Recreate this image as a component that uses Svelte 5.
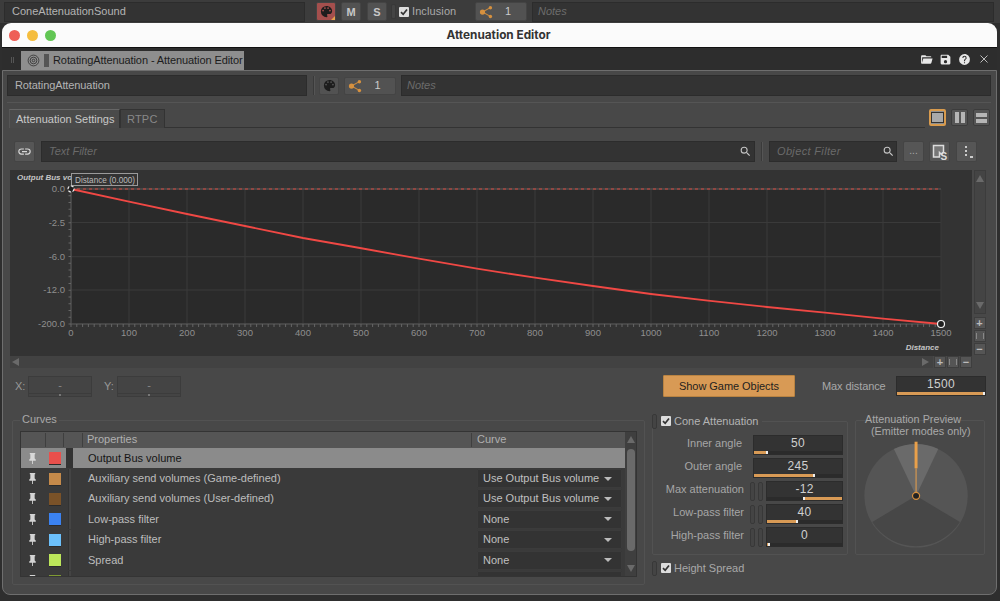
<script>
  const I = {
    palette: "M17.5,12A1.5,1.5 0 0,1 16,10.5A1.5,1.5 0 0,1 17.5,9A1.5,1.5 0 0,1 19,10.5A1.5,1.5 0 0,1 17.5,12M14.5,8A1.5,1.5 0 0,1 13,6.5A1.5,1.5 0 0,1 14.5,5A1.5,1.5 0 0,1 16,6.5A1.5,1.5 0 0,1 14.5,8M9.5,8A1.5,1.5 0 0,1 8,6.5A1.5,1.5 0 0,1 9.5,5A1.5,1.5 0 0,1 11,6.5A1.5,1.5 0 0,1 9.5,8M6.5,12A1.5,1.5 0 0,1 5,10.5A1.5,1.5 0 0,1 6.5,9A1.5,1.5 0 0,1 8,10.5A1.5,1.5 0 0,1 6.5,12M12,3A9,9 0 0,0 3,12A9,9 0 0,0 12,21A1.5,1.5 0 0,0 13.5,19.5C13.5,19.11 13.35,18.76 13.11,18.5C12.88,18.23 12.73,17.88 12.73,17.5A1.5,1.5 0 0,1 14.23,16H16A5,5 0 0,0 21,11C21,6.58 16.97,3 12,3Z",
    pin: "M16,12V4H17V2H7V4H8V12L6,14V16H11.2V22H12.8V16H18V14L16,12Z",
    save: "M15,9H5V5H15M12,19A3,3 0 0,1 9,16A3,3 0 0,1 12,13A3,3 0 0,1 15,16A3,3 0 0,1 12,19M17,3H5C3.89,3 3,3.9 3,5V19A2,2 0 0,0 5,21H19A2,2 0 0,0 21,19V7L17,3Z",
    help: "M15.07,11.25L14.17,12.17C13.45,12.89 13,13.5 13,15H11V14.5C11,13.39 11.45,12.39 12.17,11.67L13.41,10.41C13.78,10.05 14,9.55 14,9C14,7.89 13.1,7 12,7A2,2 0 0,0 10,9H8A4,4 0 0,1 12,5A4,4 0 0,1 16,9C16,9.88 15.64,10.67 15.07,11.25M13,19H11V17H13M12,2A10,10 0 0,0 2,12A10,10 0 0,0 12,22A10,10 0 0,0 22,12C22,6.47 17.5,2 12,2Z",
    folder: "M19,20H4C2.89,20 2,19.1 2,18V6C2,4.89 2.89,4 4,4H10L12,6H19A2,2 0 0,1 21,8H21L4,8V18L6.14,10H23.21L20.93,18.5C20.7,19.37 19.92,20 19,20Z",
    link: "M3.9,12C3.9,10.29 5.29,8.9 7,8.9H11V7H7A5,5 0 0,0 2,12A5,5 0 0,0 7,17H11V15.1H7C5.29,15.1 3.9,13.71 3.9,12M8,13H16V11H8V13M17,7H13V8.9H17C18.71,8.9 20.1,10.29 20.1,12C20.1,13.71 18.71,15.1 17,15.1H13V17H17A5,5 0 0,0 22,12A5,5 0 0,0 17,7Z",
    close: "M5,5L19,19M19,5L5,19",
    search: "M15.5,14H14.7L14.4,13.7C15.4,12.5 16,11.1 16,9.5A6.5,6.5 0 1,0 9.5,16C11.1,16 12.5,15.4 13.7,14.4L14,14.7V15.5L19,20.5L20.5,19L15.5,14M9.5,14A4.5,4.5 0 1,1 14,9.5A4.5,4.5 0 0,1 9.5,14Z"
  };
  const xs = Array.from({ length: 16 }, (_, i) => 72 + 58 * i);
  const ys = [[189, "0.0"], [222.5, "-2.5"], [256.7, "-6.0"], [290, "-12.0"], [324, "-200.0"]];
  const xTicks = Array.from({ length: 151 }, (_, i) => 72 + 5.8 * i);
  const yTicks = Array.from({ length: 21 }, (_, i) => 189 + 6.75 * i);
  const curve = "72,189 130,201.7 188,214 246,226 304,238 361,248 420,258.7 478,268.7 536,277.7 594,286 652,294 709,300.7 768,307 826,312.7 884,318.7 942,324";
  const rows = [
    { label: "Output Bus volume", color: "#e9504c", sel: true },
    { label: "Auxiliary send volumes (Game-defined)", color: "#c58a4a", curve: "Use Output Bus volume" },
    { label: "Auxiliary send volumes (User-defined)", color: "#7a5228", curve: "Use Output Bus volume" },
    { label: "Low-pass filter", color: "#3b82f0", curve: "None" },
    { label: "High-pass filter", color: "#6cc0fb", curve: "None" },
    { label: "Spread", color: "#bce65a", curve: "None" },
    { label: "", color: "#7f9a33", curve: "" }
  ];
  const cone = [
    { label: "Inner angle", value: "50", left: 0, width: 14 },
    { label: "Outer angle", value: "245", left: 0, width: 61 },
    { label: "Max attenuation", value: "-12", left: 36, width: 39, grip: true, rev: true },
    { label: "Low-pass filter", value: "40", left: 0, width: 31, grip: true },
    { label: "High-pass filter", value: "0", left: 0, width: 3, grip: true }
  ];
</script>

{#snippet icon(d, cls)}
  <svg class={"ic " + cls} viewBox="0 0 24 24" aria-hidden="true"><path {d} /></svg>
{/snippet}

{#snippet share()}
  <svg class="share" viewBox="0 0 16 16" aria-hidden="true">
    <path d="M4 8L13 3M4 8L13 13" />
    <circle cx="4" cy="8" r="3" /><circle cx="13" cy="3" r="2" /><circle cx="13" cy="13" r="2" />
  </svg>
{/snippet}

{#snippet grip()}
  <span class="grip"></span>
{/snippet}

{#snippet check()}
  <svg class="check" viewBox="0 0 11 11" aria-hidden="true"><path d="M2.2 5.6L4.6 8L8.8 2.8" /></svg>
{/snippet}

<div class="app">
  <div class="strip">
    <div class="input name-top">ConeAttenuationSound</div>
    <div class="btn pal-red">{@render icon(I.palette, "pal")}<i class="corner"></i></div>
    <div class="btn ms">M</div>
    <div class="btn ms">S</div>
    {@render grip()}
    <span class="cb top-cb">{@render check()}</span>
    <span class="incl">Inclusion</span>
    <div class="btn sharebtn top-share">{@render share()}<span>1</span></div>
    <div class="input notes top-notes">Notes</div>
  </div>

  <div class="window">
    <div class="title">
      <div class="lights"><i class="r"></i><i class="y"></i><i class="g"></i></div>
      <b>Attenuation Editor</b>
    </div>
    <div class="tabstrip">
      <span class="dots"></span>
      <div class="doc">
        <svg class="tgt" viewBox="0 0 14 14" aria-hidden="true"><circle cx="7" cy="7" r="5.8" /><circle cx="7" cy="7" r="3.6" /><circle cx="7" cy="7" r="1.4" /></svg>
        <i class="docbar"></i>
        <span>RotatingAttenuation - Attenuation Editor</span>
      </div>
      <div class="wintools">
        {@render icon(I.folder, "w")}
        {@render icon(I.save, "w")}
        {@render icon(I.help, "w")}
        <svg class="ic x" viewBox="0 0 24 24" aria-hidden="true"><path d={I.close} /></svg>
      </div>
    </div>

    <div class="panel">
      <div class="namerow">
        <div class="input name">RotatingAttenuation</div>
        <i class="vsep"></i>
        <div class="btn pal-btn">{@render icon(I.palette, "pal")}</div>
        <div class="btn sharebtn pshare">{@render share()}<span>1</span></div>
        <div class="input notes pnotes">Notes</div>
      </div>
      <div class="hr"></div>

      <div class="tabsrow">
        <div class="tab on">Attenuation Settings</div>
        <div class="tab">RTPC</div>
        <div class="tabline"></div>
        <div class="vbtn active"><i class="full"></i></div>
        <div class="vbtn"><i class="half"></i><i class="half"></i></div>
        <div class="vbtn col"><i class="wide"></i><i class="wide"></i></div>
      </div>

      <div class="filters">
        <div class="btn fb linkb">{@render icon(I.link, "lk")}</div>
        <div class="input filter tf"><span>Text Filter</span>{@render icon(I.search, "sr")}</div>
        <i class="vsep fsep"></i>
        <div class="input filter of"><span>Object Filter</span>{@render icon(I.search, "sr")}</div>
        <div class="btn fb dots3">...</div>
        <div class="btn fb msb">
          <svg viewBox="0 0 18 18" aria-hidden="true">
            <path class="flag" d="M2.5 2.5H12.5V9L10.5 11.5L8.5 9.5V14H2.5Z" />
            <text x="9.5" y="17" class="mstxt">S</text>
          </svg>
        </div>
        <div class="btn fb kebab">
          <svg viewBox="0 0 18 18" aria-hidden="true"><rect x="7" y="3" width="2" height="2" /><rect x="7" y="7" width="2" height="2" /><rect x="7" y="11" width="2" height="2" /><rect x="12" y="13" width="3" height="2" /></svg>
        </div>
      </div>

      <div class="chart">
        <svg class="plot" viewBox="11 170 962 186" aria-label="Curve graph">
          <rect x="72" y="189" width="870" height="135" fill="#2a2a2a" />
          {#each xs as x}<line x1={x} y1="189" x2={x} y2="324" class="g" />{/each}
          {#each ys as y}<line x1="72" y1={y[0]} x2="942" y2={y[0]} class="g" />{/each}
          <line x1="72" y1="324" x2="942" y2="324" class="axis" />
          <line x1="72" y1="189" x2="72" y2="324" class="axis" />
          <line x1="72" y1="189" x2="942" y2="189" class="axis" />
          <line x1="72" y1="189" x2="942" y2="189" class="dash" />
          {#each xTicks as x}<line x1={x} y1="324" x2={x} y2="327" class="tick" />{/each}
          {#each yTicks as y}<line x1="69.5" y1={y} x2="72" y2={y} class="tick" />{/each}
          {#each ys as y}<text x="66" y={y[0] + 3} class="lbl" text-anchor="end">{y[1]}</text>{/each}
          {#each xs as x, i}<text {x} y="336" class="lbl" text-anchor="middle">{i * 100}</text>{/each}
          <polyline points={curve} class="curve" />
          <text x="18" y="180" class="axt">Output Bus vol</text>
          <rect x="72.5" y="173.5" width="66" height="12" class="tip" />
          <text x="76" y="182.5" class="tiptxt">Distance (0.000)</text>
          <circle cx="72" cy="189" r="3" class="pt first" />
          <circle cx="942" cy="324" r="3.5" class="pt" />
          <text x="940" y="350" class="axt" text-anchor="end">Distance</text>
        </svg>
        <div class="vbar">
          <div class="vtrack"><i class="tri up"></i><i class="tri down"></i></div>
          <div class="zb">+</div><div class="zb fit"><i></i></div><div class="zb">−</div>
        </div>
        <div class="hbar">
          <div class="htrack"><i class="tri left"></i><i class="tri right"></i></div>
          <div class="zb">+</div><div class="zb fit"><i></i></div><div class="zb">−</div>
        </div>
      </div>

      <div class="ctrl">
        <span class="xy">X:</span><div class="xybox"><span>-</span><i class="xytrack"><i></i></i></div>
        <span class="xy yl">Y:</span><div class="xybox"><span>-</span><i class="xytrack"><i></i></i></div>
        <div class="showgo">Show Game Objects</div>
        <span class="maxl">Max distance</span>
        <div class="field maxf"><div class="val">1500</div><div class="track"><div class="fill full100"></div></div></div>
      </div>

      <div class="bottom">
        <div class="col-curves">
          <div class="legend">Curves</div>
          <div class="box curvesbox">
            <div class="table">
              <div class="thead">
                <span class="th c1"></span><span class="th c2"></span><span class="th c3"></span>
                <span class="th props">Properties</span>
                <span class="th curvec">Curve</span>
              </div>
              <div class="tbody">
                {#each rows as r}
                  <div class="row" class:sel={r.sel}>
                    <div class="pincell">{@render icon(I.pin, "pinic")}<i class="sw" style:background={r.color}></i></div>
                    <i class="rowgrip"></i>
                    <div class="rowmain">
                      <span class="rl">{r.label}</span>
                      {#if r.curve !== undefined}<div class="dd"><span>{r.curve}</span>{#if r.curve}<i class="tri ddtri"></i>{/if}</div>{/if}
                    </div>
                  </div>
                {/each}
              </div>
              <div class="sb">
                <i class="tri up"></i>
                <div class="thumb"></div>
                <i class="tri down"></i>
              </div>
            </div>
          </div>
        </div>

        <div class="col-cone">
          <div class="legend conel">{@render grip()}<span class="cb">{@render check()}</span>Cone Attenuation</div>
          <div class="box conebox">
            {#each cone as c}
              <div class="conerow">
                <span class="cl" class:short={c.grip}>{c.label}</span>
                {#if c.grip}{@render grip()}{@render grip()}{/if}
                <div class="field" class:narrow={c.grip}>
                  <div class="val">{c.value}</div>
                  <div class="track">
                    <div class="fill" class:rev={c.rev} style:margin-left="{c.left}px" style:width="{c.width}px"></div>
                  </div>
                </div>
              </div>
            {/each}
          </div>
          <div class="hs">{@render grip()}<span class="cb">{@render check()}</span>Height Spread</div>
        </div>

        <div class="col-prev">
          <div class="legend prevl">Attenuation Preview<br />&nbsp;&nbsp;(Emitter modes only)</div>
          <div class="box prevbox">
            <svg viewBox="0 0 130 135" aria-label="Preview">
              <circle cx="61" cy="76" r="52.5" fill="#555" />
              <path d="M61 76L38.5 28.5A52.5 52.5 0 0 1 83.5 28.5Z" fill="#6a6a6a" />
              <path d="M61 76L105.5 102.5A52.5 52.5 0 0 1 16.5 102.5Z" fill="#474747" />
              <rect x="59.5" y="21" width="3" height="27" fill="#e9a04a" />
              <rect x="60.5" y="48" width="1" height="27" fill="#e9a04a" />
              <circle cx="61" cy="76" r="3.6" fill="#222" stroke="#d9913f" stroke-width="1.2" />
            </svg>
          </div>
        </div>
      </div>
    </div>
  </div>
</div>

<style>
  :global(body) { margin: 0; background: #2b2b2b; }
  .app { width: 1000px; height: 601px; overflow: hidden; background: #2e2e2e; font: 11px/1 "Liberation Sans", Arial, sans-serif; color: #b8b8b8; }
  i { display: block; }
  .strip { height: 23px; background: #3c3c3c; display: flex; align-items: center; padding-left: 4px; box-sizing: border-box; }
  .input { background: #333; border: 1px solid #2c2c2c; box-sizing: border-box; height: 20px; display: flex; align-items: center; padding-left: 7px; color: #b4b4b4; }
  .name-top { width: 301px; height: 20px; margin-right: 11px; }
  .btn { box-sizing: border-box; height: 19px; background: #525252; border: 1px solid #444; border-radius: 2px; display: flex; align-items: center; justify-content: center; flex: none; }
  .ic { display: block; fill: currentColor; }
  .pal { width: 15px; height: 15px; color: #1d1d1d; }
  .pal-red { width: 20px; background: #a44f4d; margin-right: 5px; position: relative; }
  .corner { position: absolute; right: 0; bottom: 0; border-left: 4px solid transparent; border-bottom: 4px solid #e8a24c; }
  .ms { width: 20px; margin-right: 6px; font: bold 11px "Liberation Sans", sans-serif; color: #c8c8c8; }
  .ms + .ms { margin-right: 4px; }
  .grip { display: block; flex: none; width: 3px; height: 13px; border: 1px solid #383838; border-radius: 2px; background: #444; box-sizing: content-box; }
  .cb { display: flex; flex: none; width: 10px; height: 10px; background: #ddd; border-radius: 1px; align-items: center; justify-content: center; }
  .check { width: 10px; height: 10px; fill: none; stroke: #333; stroke-width: 1.9; }
  .top-cb { margin-left: 3px; }
  .incl { margin: 0 19px 0 3px; color: #aaa; width: 44px; letter-spacing: .1px; }
  .sharebtn { gap: 0; justify-content: flex-start; padding-left: 3px; color: #ccc; }
  .sharebtn span { flex: 1; text-align: center; }
  .share { width: 14px; height: 14px; flex: none; }
  .share path { stroke: #c98a3f; stroke-width: 1.2; fill: none; }
  .share circle { fill: #d6913f; }
  .top-share { width: 52px; margin-right: 5px; padding-right: 3px; }
  .notes { font-style: italic; color: #6c6c6c; }
  .top-notes { width: 462px; height: 20px; padding-left: 5px; }

  .window { margin: 0 3px 0 2px; height: 572px; display: flex; flex-direction: column; }
  .title { height: 25px; background: #fbfbfb; border-radius: 9px 9px 0 0; display: flex; align-items: center; justify-content: center; position: relative; color: #333; box-sizing: border-box; border-bottom: 1px solid #111; }
  .title b { font: bold 11.8px "Inter", "Liberation Sans", sans-serif; margin-right: 2px; }
  .lights { position: absolute; left: 7px; top: 7px; display: flex; gap: 7px; }
  .lights i { width: 11px; height: 11px; border-radius: 50%; }
  .lights .r { background: #ee5f57; } .lights .y { background: #f5bd3e; } .lights .g { background: #62c654; }
  .tabstrip { height: 22px; flex: none; background: #2d2d2d; display: flex; align-items: flex-end; }
  .dots { width: 3px; height: 6px; border-left: 1px solid #555; border-right: 1px solid #555; margin: 0 7px 7px 9px; box-sizing: border-box; }
  .doc { width: 223px; height: 19px; background: #8e8e8e; display: flex; align-items: center; color: #1c1c1c; font-size: 11px; letter-spacing: -.09px; box-sizing: border-box; padding-left: 6px; white-space: nowrap; }
  .tgt { width: 13px; height: 13px; fill: none; stroke: #333; stroke-width: .9; flex: none; margin-right: 4px; }
  .docbar { width: 5px; height: 13px; background: #555; margin-right: 4px; flex: none; }
  .wintools { margin-left: auto; display: flex; gap: 6px; align-items: center; height: 22px; padding-right: 7px; color: #e8e8e8; }
  .w { width: 13px; height: 13px; }
  .x { width: 12px; height: 12px; fill: none; stroke: #bbb; stroke-width: 2; margin-left: 1px; }

  .panel { flex: none; height: 525px; background: #484848; border: 1px solid #6e6e6e; border-radius: 0 0 8px 8px; box-sizing: border-box; padding-top: 4px; overflow: hidden; }
  .namerow { display: flex; align-items: center; height: 21px; margin-left: 4px; width: 984px; }
  .name { width: 300px; height: 21px; padding-left: 7px; letter-spacing: -.1px; }
  .vsep { width: 2px; height: 19px; background: #3a3a3a; border-right: 1px solid #555; margin: 0 4px 0 6px; flex: none; box-sizing: border-box; }
  .pal-btn { width: 20px; height: 18px; margin-right: 5px; }
  .pshare { width: 52px; height: 18px; margin-right: 5px; padding-right: 2px; }
  .pnotes { flex: 1; height: 21px; padding-left: 5px; }
  .hr { height: 1px; background: #555; margin: 6px 5px 0 4px; }
  .tabsrow { display: flex; height: 19px; margin: 6px 0 0 6px; align-items: flex-start; }
  .tab { height: 19px; box-sizing: border-box; padding: 0 6px; line-height: 18px; background: #404040; border: 1px solid #333; border-bottom: 0; color: #888; flex: none; letter-spacing: .2px; }
  .tab.on { width: 111px; background: #4a4a4a; color: #c8c8c8; border-color: #666 #333 transparent #555; padding: 0 6px; white-space: nowrap; letter-spacing: 0; }
  .tabline { flex: 1; height: 18px; border-bottom: 1px solid #333; margin-right: 4px; }
  .vbtn { width: 17px; height: 17px; box-sizing: border-box; background: #555; border: 1px solid #3c3c3c; border-radius: 2px; margin-right: 5px; display: flex; gap: 2px; align-items: center; justify-content: center; flex: none; }
  .vbtn.col { flex-direction: column; margin-right: 6px; }
  .vbtn.active { background: #8f8f8f; border: 2px solid #d89b4e; }
  .full { width: 13px; height: 9px; background: #a9a9a9; border: 1px solid #333; box-sizing: content-box; }
  .active .full { width: 11px; height: 9px; }
  .half { width: 4px; height: 11px; background: #b5b5b5; }
  .wide { width: 11px; height: 4px; background: #b5b5b5; }

  .filters { display: flex; align-items: center; height: 21px; margin: 13px 0 0 11px; }
  .fb { width: 21px; height: 21px; color: #bbb; background: #565656; }
  .linkb { margin-right: 6px; }
  .lk { width: 15px; height: 15px; color: #d8d8d8; }
  .filter { justify-content: space-between; padding-right: 3px; font-style: italic; color: #6a6a6a; height: 21px; }
  .tf { width: 714px; padding-right: 2px; }
  .of { width: 128px; margin-right: 6px; letter-spacing: .35px; padding-right: 1px; }
  .fsep { margin: 0 6px 0 6px; }
  .sr { width: 13px; height: 13px; color: #c4c4c4; flex: none; }
  .dots3 { margin-right: 5px; align-items: flex-end; padding-bottom: 5px; color: #aaa; font-size: 10px; }
  .msb { margin-right: 6px; }
  .msb svg, .kebab svg { width: 18px; height: 18px; }
  .flag { fill: #777; stroke: #ddd; stroke-width: 1.5; }
  .mstxt { font: bold 10px "Liberation Sans", sans-serif; fill: #ddd; }
  .kebab rect { fill: #ccc; }

  .chart { margin: 8px 0 0 7px; display: grid; grid-template-columns: 962px 15px; grid-template-rows: 186px 12px; width: 977px; background: #333; }
  .plot { display: block; width: 962px; height: 186px; }
  .g { stroke: #3a3a3a; stroke-width: 1; }
  .axis { stroke: #585858; stroke-width: 1; }
  .dash { stroke: #d8493f; stroke-width: 1; stroke-dasharray: 3 3; }
  .tick { stroke: #666; stroke-width: 1; }
  .lbl { font: 9.5px "Liberation Sans", sans-serif; fill: #8f8f8f; }
  .curve { fill: none; stroke: #f04844; stroke-width: 1.8; }
  .axt { font: italic bold 8px "Liberation Sans", sans-serif; fill: #c4c4c4; }
  .tip { fill: #333; stroke: #9a9a9a; stroke-width: 1; }
  .tiptxt { font: 8.2px "Liberation Sans", sans-serif; fill: #bbb; }
  .pt { fill: #1e1e1e; stroke: #f2f2f2; stroke-width: 1.2; }
  .pt.first { stroke-dasharray: 3 1.5; }
  .vbar { grid-column: 2; grid-row: 1 / span 2; display: flex; flex-direction: column; align-items: center; width: 15px; background: #484848; }
  .vtrack { width: 12px; height: 144px; flex: none; background: #444; border: 1px solid #3c3c3c; box-sizing: border-box; display: flex; flex-direction: column; justify-content: space-between; align-items: center; padding: 4px 0; margin-bottom: 3px; }
  .zb { box-sizing: border-box; width: 12px; height: 12px; background: #555; border: 1px solid #3e3e3e; color: #bbb; font: bold 11px/10px "Liberation Sans", sans-serif; text-align: center; margin-bottom: 1px; flex: none; display: flex; align-items: center; justify-content: center; }
  .fit i { width: 6px; height: 6px; border-left: 1px solid #888; border-right: 1px solid #888; }
  .hbar { grid-column: 1; grid-row: 2; display: flex; align-items: center; background: #484848; gap: 1px; }
  .htrack { width: 923px; height: 12px; background: #424242; box-sizing: border-box; display: flex; justify-content: space-between; align-items: center; padding: 0 4px 0 2px; flex: none; }
  .hbar .zb { margin: 0; }
  .tri { width: 0; height: 0; flex: none; }
  .tri.up { border: 4.5px solid transparent; border-top: 0; border-bottom: 7px solid #6a6a6a; }
  .tri.down { border: 4.5px solid transparent; border-bottom: 0; border-top: 7px solid #6a6a6a; }
  .tri.left { border: 4.5px solid transparent; border-left: 0; border-right: 7px solid #6a6a6a; }
  .tri.right { border: 4.5px solid transparent; border-right: 0; border-left: 7px solid #6a6a6a; }

  .ctrl { display: flex; align-items: center; height: 22px; margin: 7px 0 0 12px; }
  .xy { width: 13px; color: #999; font-size: 11px; }
  .yl { margin-left: 12px; }
  .xybox { width: 64px; height: 21px; box-sizing: border-box; background: #444; border: 1px solid #3c3c3c; color: #888; display: flex; flex-direction: column; align-items: center; }
  .xybox span { flex: 1; line-height: 16px; }
  .xytrack { width: 100%; height: 3px; border-top: 1px solid #3c3c3c; display: flex; justify-content: center; }
  .xytrack i { width: 2px; height: 2px; background: #777; }
  .showgo { margin-left: 482px; width: 132px; height: 22px; box-sizing: border-box; background: #d89a55; border: 1px solid #b98342; border-radius: 1px; color: #1f1f1f; text-align: center; line-height: 20px; letter-spacing: -.05px; }
  .maxl { margin-left: 27px; width: 74px; color: #a8a8a8; white-space: nowrap; letter-spacing: -.1px; }
  .maxf { width: 90px; height: 20px; }

  .field { box-sizing: border-box; background: #333; border: 1px solid #2c2c2c; width: 90px; height: 20px; display: flex; flex-direction: column; flex: none; }
  .field.narrow { width: 77px; }
  .val { flex: 1; text-align: center; color: #d0d0d0; line-height: 15px; font-size: 12px; letter-spacing: .3px; }
  .track { height: 3px; display: flex; background: #2b2b2b; }
  .fill { height: 3px; background: #d89a55; border-right: 2px solid #eee; box-sizing: border-box; }
  .fill.rev { border-right: 0; border-left: 2px solid #eee; }
  .full100 { width: 100%; }

  .bottom { display: grid; grid-template-columns: 633px 196px 130px; gap: 7px; margin: 16px 0 0 9px; align-items: start; }
  .legend { position: relative; z-index: 1; height: 12px; line-height: 12px; width: fit-content; margin: 0 0 -5px 8px; padding: 0 2px; background: #484848; color: #a8a8a8; }
  .box { border: 1px solid #525252; box-sizing: border-box; border-radius: 2px; }
  .curvesbox { height: 165px; padding: 10px 7px 0; }
  .table { height: 146px; width: 617px; background: #3a3a3a; border: 1px solid #343434; box-sizing: border-box; display: grid; grid-template-columns: 604px 12px; grid-template-rows: 16px 1fr; overflow: hidden; }
  .thead { display: flex; background: #555; height: 16px; align-items: center; color: #b0b0b0; }
  .th { display: block; height: 14px; border-right: 1px solid #3f3f3f; line-height: 13px; box-sizing: border-box; flex: none; }
  .c1 { width: 25px; } .c2 { width: 18px; } .c3 { width: 19px; }
  .props { width: 389px; padding-left: 4px; }
  .curvec { border: 0; padding-left: 5px; flex: 1; }
  .tbody { grid-column: 1; overflow: hidden; }
  .sb { grid-column: 2; grid-row: 1 / span 2; background: #3f3f3f; display: flex; flex-direction: column; align-items: center; padding: 4px 0; box-sizing: border-box; gap: 0; justify-content: space-between; }
  .thumb { width: 8px; height: 102px; background: #6a6a6a; border-radius: 4px; margin-top: -1px; }
  .sb .tri.down { margin-top: 8px; }
  .row { display: flex; height: 20.4px; align-items: center; color: #bdbdbd; }
  .pincell { width: 45px; height: 20px; display: flex; align-items: center; flex: none; box-sizing: border-box; padding-left: 5px; }
  .pinic { width: 13px; height: 13px; color: #d4d4d4; flex: none; margin-right: 10px; }
  .sw { width: 12px; height: 12px; flex: none; box-shadow: 0 1px 0 #2b2b2b; }
  .rowgrip { width: 3px; height: 20px; background: #444; border-left: 1px solid #333; margin-left: 2px; flex: none; box-sizing: border-box; }
  .rowmain { flex: 1; display: flex; height: 20px; align-items: center; justify-content: space-between; padding-left: 17px; box-sizing: border-box; }
  .rl { white-space: nowrap; }
  .sel { color: #151515; }
  .sel .pincell, .sel .rowmain { background: #8b8b8b; }
  .sel .rowmain { padding-left: 15px; }
  .sel .pinic { color: #d8d8d8; }
  .sel .rowgrip { background: #333; margin-left: 0; width: 7px; }
  .dd { width: 145px; height: 19px; box-sizing: border-box; background: #333; border: 1px solid #3b3b3b; border-radius: 1px; margin-right: 3px; display: flex; align-items: center; justify-content: space-between; padding: 0 5px 0 5px; color: #c0c0c0; flex: none; white-space: nowrap; }
  .ddtri { border: 4px solid transparent; border-bottom: 0; border-top: 4px solid #bbb; margin-right: 4px; }

  .conel { display: flex; align-items: center; gap: 3px; margin: 2px 0 -6px 0; padding: 0 4px 0 0; color: #b4b4b4; }
  .conel .cb { margin-left: 1px; }
  .conebox { height: 134px; padding: 13px 4px 0 0; display: flex; flex-direction: column; gap: 3px; }
  .conerow { display: flex; align-items: center; justify-content: flex-end; height: 20px; gap: 3px; }
  .cl { flex: 1; text-align: right; padding: 0 8px 3px 0; color: #a6a6a6; white-space: nowrap; font-size: 11px; }
  .cl.short { padding-right: 3px; margin-left: -8px; }
  .conerow .grip { height: 17px; }
  .hs { display: flex; align-items: center; gap: 3px; margin: 6px 0 0 0; height: 14px; color: #a8a8a8; }
  .hs .cb { margin-left: 1px; }

  .prevl { margin: 0 0 -17px 10px; background: transparent; padding: 0; line-height: 12px; height: 24px; color: #a8a8a8; white-space: nowrap; font-size: 10.8px; }
  .prevbox { height: 135px; }
  .prevbox svg { display: block; width: 128px; height: 133px; }
</style>
